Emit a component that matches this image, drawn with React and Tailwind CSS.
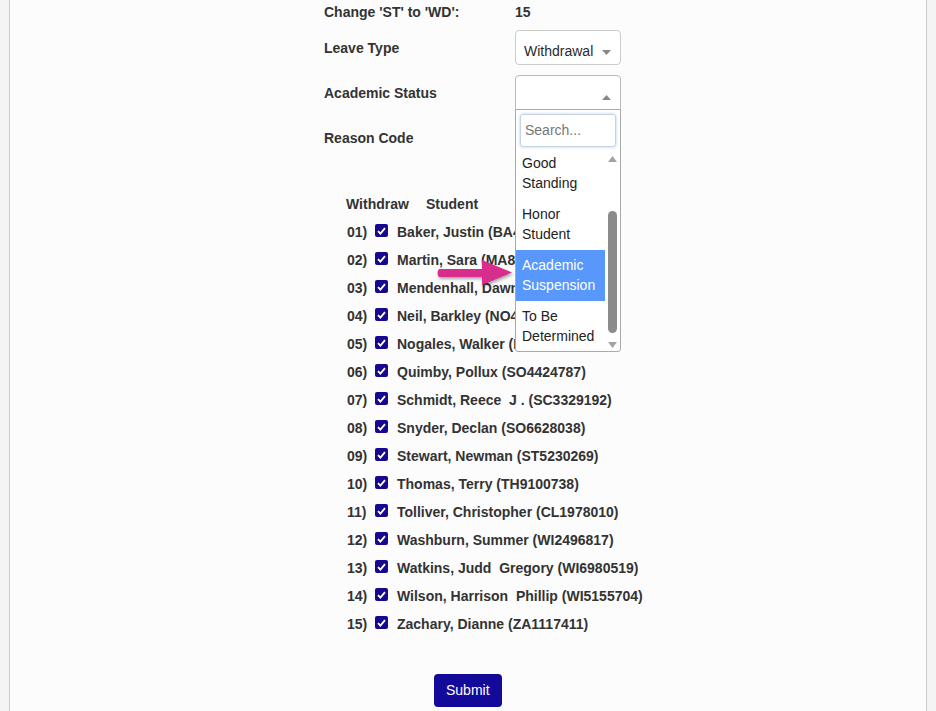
import React from "react";

const students = [
  ["01)", "Baker, Justin (BA4417264)"],
  ["02)", "Martin, Sara (MA8120455)"],
  ["03)", "Mendenhall, Dawn (ME2210937)"],
  ["04)", "Neil, Barkley (NO4081226)"],
  ["05)", "Nogales, Walker (NO5530881)"],
  ["06)", "Quimby, Pollux (SO4424787)"],
  ["07)", "Schmidt, Reece  J . (SC3329192)"],
  ["08)", "Snyder, Declan (SO6628038)"],
  ["09)", "Stewart, Newman (ST5230269)"],
  ["10)", "Thomas, Terry (TH9100738)"],
  ["11)", "Tolliver, Christopher (CL1978010)"],
  ["12)", "Washburn, Summer (WI2496817)"],
  ["13)", "Watkins, Judd  Gregory (WI6980519)"],
  ["14)", "Wilson, Harrison  Phillip (WI5155704)"],
  ["15)", "Zachary, Dianne (ZA1117411)"],
];

const options = [
  ["Good", "Standing"],
  ["Honor", "Student"],
  ["Academic", "Suspension"],
  ["To Be", "Determined"],
];

function Caret({ up }) {
  return (
    <svg width="9" height="5" viewBox="0 0 9 5" className="absolute right-[9px] top-[19px]">
      {up ? <path d="M0 5 L4.5 0 L9 5 Z" fill="#888" /> : <path d="M0 0 L9 0 L4.5 5 Z" fill="#888" />}
    </svg>
  );
}

function Check() {
  return (
    <span className="w-[13px] h-[13px] mb-[3px] rounded-[2px] bg-[#17098f] flex items-center justify-center">
      <svg width="9" height="8" viewBox="0 0 9 8">
        <path d="M1 4.2 L3.4 6.6 L8 1.2" stroke="#fff" strokeWidth="1.8" fill="none" />
      </svg>
    </span>
  );
}

export default function App() {
  return (
    <div className="min-h-screen bg-[#f4f4f4] px-[9px]" style={{ fontFamily: '"Liberation Sans", Arial, sans-serif' }}>
      <div className="min-h-[711px] bg-[#fcfcfc] border-x border-[#cfcfcf] pl-[314px] text-[14px] text-[#333]">
        {/* header fields */}
        <div className="flex items-center h-[24px] font-bold">
          <div className="w-[191px]">Change 'ST' to 'WD':</div>
          <div>15</div>
        </div>

        <div className="flex items-center h-[35px] mt-[6px]">
          <div className="w-[191px] font-bold pt-[1px]">Leave Type</div>
          <div className="relative w-[106px] h-[35px] bg-white border border-[#ccc] rounded-[4px] pl-[8px] flex items-center pt-[7px] text-[#2a2a2a]">
            Withdrawal
            <Caret />
          </div>
        </div>

        <div className="flex items-center h-[35px] mt-[10px]">
          <div className="w-[191px] font-bold pt-[1px]">Academic Status</div>
          <div className="relative w-[106px] h-[35px] bg-white border border-[#bbb] rounded-t-[4px]">
            <Caret up />
            {/* open dropdown */}
            <div className="absolute left-[-1px] top-[33px] w-[106px] h-[243px] bg-white border border-[#aaa] rounded-b-[3px] z-10 overflow-hidden">
              <div className="p-[4px] pb-0">
                <div className="h-[33px] w-[96px] border border-[#c6d3e3] rounded-[3px] shadow-[0_0_3px_rgba(102,160,230,0.5)] pl-[4px] flex items-center text-[#767676]">
                  Search...
                </div>
              </div>
              <div className="flex mt-[1px] h-[204px]">
                <div className="w-[89px]">
                  {options.map((o, i) => (
                    <div
                      key={i}
                      className={
                        "h-[51px] pt-[5px] pl-[6px] leading-[20px] " +
                        (i === 2 ? "bg-[#5897fb] text-white" : "text-[#222]")
                      }
                    >
                      <div>{o[0]}</div>
                      <div>{o[1]}</div>
                    </div>
                  ))}
                </div>
                <div className="w-[15px] flex flex-col items-center pt-[8px] pb-[4px]">
                  <svg width="9" height="6" viewBox="0 0 9 6">
                    <path d="M0 6 L4.5 0 L9 6 Z" fill="#a3a3a3" />
                  </svg>
                  <div className="w-[9px] h-[122px] mt-[49px] rounded-full bg-[#8b8b8b]" />
                  <div className="flex-1" />
                  <svg width="9" height="6" viewBox="0 0 9 6">
                    <path d="M0 0 L9 0 L4.5 6 Z" fill="#a3a3a3" />
                  </svg>
                </div>
              </div>
            </div>
          </div>
        </div>

        <div className="flex items-center h-[35px] mt-[10px]">
          <div className="w-[191px] font-bold pt-[1px]">Reason Code</div>
          <div className="relative w-[106px] h-[35px] bg-white border border-[#ccc] rounded-[4px]">
            <Caret />
          </div>
        </div>

        {/* student list */}
        <div className="relative ml-[22px] mt-[35px] font-bold">
          <div className="flex items-center h-[28px]">
            <span className="w-[80px]">Withdraw</span>
            <span>Student</span>
          </div>
          {students.map(([n, name]) => (
            <div key={n} className="flex items-center h-[28px]">
              <span className="w-[29px] pl-[1px]">{n}</span>
              <Check />
              <span className="ml-[9px] whitespace-pre">{name}</span>
            </div>
          ))}

          {/* pointer arrow */}
          <svg
            width="82"
            height="34"
            viewBox="0 0 82 34"
            className="absolute left-[89px] top-[67px] z-20"
            style={{ filter: "drop-shadow(1px 2px 1.5px rgba(0,0,0,0.35))" }}
          >
            <path d="M4 12 L47 12 L47 3 L77 15.5 L47 28 L47 20 L4 20 Q1 16 4 12 Z" fill="#d92d8e" />
          </svg>
        </div>

        <div className="pl-[110px] pt-[36px]">
          <button className="h-[33px] px-[12px] rounded-[4px] bg-[#140a9a] text-white text-[14px]">
            Submit
          </button>
        </div>
      </div>
    </div>
  );
}
